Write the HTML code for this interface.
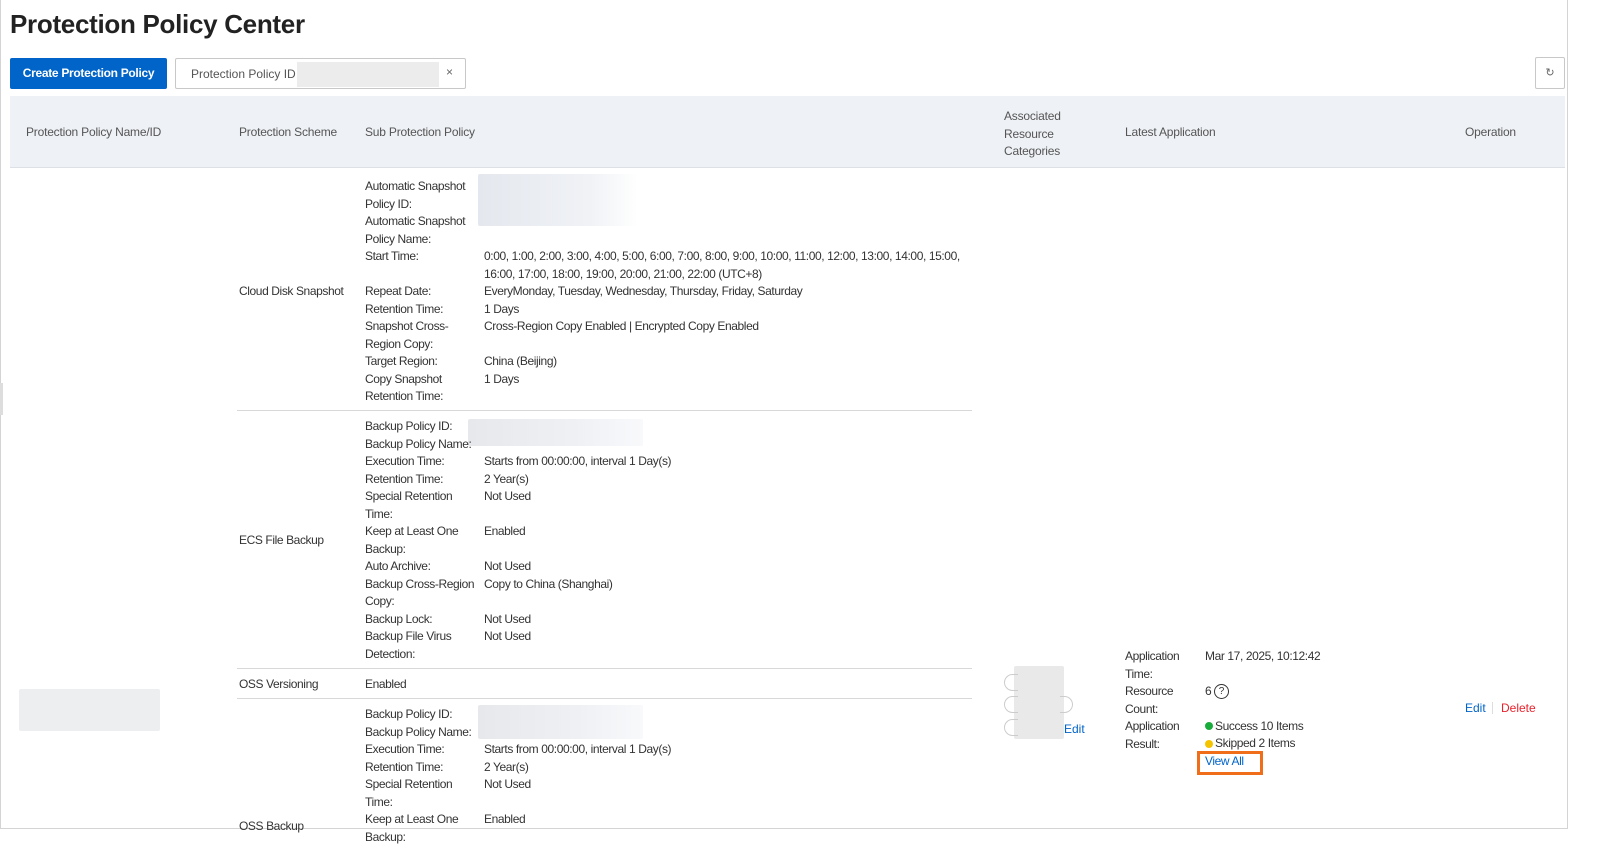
<!DOCTYPE html>
<html><head><meta charset="utf-8"><style>
*{margin:0;padding:0;box-sizing:border-box}
body{width:1614px;height:853px;background:#fff;font-family:"Liberation Sans",sans-serif;font-size:12px;color:#333;position:relative;overflow:hidden}
.a{position:absolute;white-space:nowrap;line-height:17px}
.h{position:absolute;white-space:nowrap;color:#555;font-size:12px;letter-spacing:-0.2px}
.t{letter-spacing:-0.4px}
.line{position:absolute;height:1px;background:#d8d8d8}
.blur{position:absolute;background:linear-gradient(90deg,#e6e8ec,#eef0f4 60%,#f8f9fb);border-radius:2px}
</style></head><body>
<div style="position:absolute;left:0;top:0;width:1568px;height:829px;border:1px solid #d4d4d4;border-top:none"></div>
<div style="position:absolute;left:0;top:383px;width:3px;height:32px;background:#ddd"></div>
<div class="a" style="left:10px;top:8px;font-size:26px;line-height:32px;font-weight:bold;color:#222;letter-spacing:-0.3px">Protection Policy Center</div>
<div style="position:absolute;left:10px;top:58px;width:157px;height:31px;background:#0064c8;border-radius:2px;color:#fff;font-weight:bold;font-size:12px;line-height:31px;text-align:center;letter-spacing:-0.3px">Create Protection Policy</div>
<div style="position:absolute;left:175px;top:58px;width:291px;height:31px;border:1px solid #c8c8c8;border-radius:2px"></div>
<div class="a" style="left:191px;top:66px;color:#555">Protection Policy ID</div>
<div style="position:absolute;left:297px;top:62px;width:142px;height:25px;background:#ececec"></div>
<div class="a" style="left:446px;top:64px;color:#666">×</div>
<div style="position:absolute;left:1535px;top:57px;width:30px;height:32px;border:1px solid #c8c8c8;border-radius:2px;text-align:center;line-height:30px;color:#666;font-size:11px">↻</div>
<div style="position:absolute;left:10px;top:96px;width:1555px;height:72px;background:#eef1f5;border-bottom:1px solid #dde1e6"></div>
<div class="h" style="left:26px;top:125px">Protection Policy Name/ID</div>
<div class="h" style="left:239px;top:125px">Protection Scheme</div>
<div class="h" style="left:365px;top:125px">Sub Protection Policy</div>
<div class="h" style="left:1004px;top:108px;line-height:17.5px">Associated<br>Resource<br>Categories</div>
<div class="h" style="left:1125px;top:125px">Latest Application</div>
<div class="h" style="left:1465px;top:125px">Operation</div>

<div class="blur" style="left:478px;top:174px;width:160px;height:52px;background:linear-gradient(90deg,#e4e8ee,#f0f2f6 70%,#fff)"></div>
<div class="blur" style="left:468px;top:419px;width:175px;height:27px"></div>
<div class="blur" style="left:478px;top:705px;width:165px;height:34px"></div>
<div class="blur" style="left:19px;top:689px;width:141px;height:42px;background:#eceeef"></div>
<div class="blur" style="left:1014px;top:666px;width:50px;height:73px;background:#e9e9e9"></div>

<div class="a t" style="left:239px;top:283px">Cloud Disk Snapshot</div>
<div class="a t" style="left:239px;top:532px">ECS File Backup</div>
<div class="a t" style="left:239px;top:676px">OSS Versioning</div>
<div class="a t" style="left:239px;top:818px">OSS Backup</div>

<div class="a t" style="left:365px;top:178px;line-height:17.5px">Automatic Snapshot<br>Policy ID:<br>Automatic Snapshot<br>Policy Name:<br>Start Time:<br><br>Repeat Date:<br>Retention Time:<br>Snapshot Cross-<br>Region Copy:<br>Target Region:<br>Copy Snapshot<br>Retention Time:</div>
<div class="a t" style="left:484px;top:248px;line-height:17.5px">0:00, 1:00, 2:00, 3:00, 4:00, 5:00, 6:00, 7:00, 8:00, 9:00, 10:00, 11:00, 12:00, 13:00, 14:00, 15:00,<br>16:00, 17:00, 18:00, 19:00, 20:00, 21:00, 22:00 (UTC+8)<br>EveryMonday, Tuesday, Wednesday, Thursday, Friday, Saturday<br>1 Days<br>Cross-Region Copy Enabled | Encrypted Copy Enabled<br><br>China (Beijing)<br>1 Days</div>
<div class="line" style="left:237px;top:410px;width:735px"></div>

<div class="a t" style="left:365px;top:418px;line-height:17.5px">Backup Policy ID:<br>Backup Policy Name:<br>Execution Time:<br>Retention Time:<br>Special Retention<br>Time:<br>Keep at Least One<br>Backup:<br>Auto Archive:<br>Backup Cross-Region<br>Copy:<br>Backup Lock:<br>Backup File Virus<br>Detection:</div>
<div class="a t" style="left:484px;top:453px;line-height:17.5px">Starts from 00:00:00, interval 1 Day(s)<br>2 Year(s)<br>Not Used<br><br>Enabled<br><br>Not Used<br>Copy to China (Shanghai)<br><br>Not Used<br>Not Used</div>
<div class="line" style="left:237px;top:668px;width:735px"></div>
<div class="a t" style="left:365px;top:676px">Enabled</div>
<div class="line" style="left:237px;top:698px;width:735px"></div>
<div class="a t" style="left:365px;top:706px;line-height:17.5px">Backup Policy ID:<br>Backup Policy Name:<br>Execution Time:<br>Retention Time:<br>Special Retention<br>Time:<br>Keep at Least One<br>Backup:</div>
<div class="a t" style="left:484px;top:741px;line-height:17.5px">Starts from 00:00:00, interval 1 Day(s)<br>2 Year(s)<br>Not Used<br><br>Enabled</div>

<div style="position:absolute;left:1004px;top:674px;width:14px;height:17px;border:1px solid #ccc;border-right:none;border-radius:9px 0 0 9px"></div>
<div style="position:absolute;left:1004px;top:696px;width:14px;height:17px;border:1px solid #ccc;border-right:none;border-radius:9px 0 0 9px"></div>
<div style="position:absolute;left:1060px;top:696px;width:13px;height:17px;border:1px solid #ccc;border-left:none;border-radius:0 9px 9px 0"></div>
<div style="position:absolute;left:1004px;top:719px;width:14px;height:17px;border:1px solid #ccc;border-right:none;border-radius:9px 0 0 9px"></div>
<div class="a" style="left:1064px;top:721px;color:#0064c8">Edit</div>

<div class="a t" style="left:1125px;top:648px;line-height:17.5px">Application<br>Time:<br>Resource<br>Count:<br>Application<br>Result:</div>
<div class="a t" style="left:1205px;top:648px">Mar 17, 2025, 10:12:42</div>
<div class="a t" style="left:1205px;top:683px">6</div>
<div style="position:absolute;left:1214px;top:684px;width:15px;height:15px;border:1px solid #333;border-radius:50%;font-size:10px;text-align:center;line-height:13px">?</div>
<div style="position:absolute;left:1205px;top:722px;width:8px;height:8px;border-radius:50%;background:#1aac3a"></div>
<div class="a t" style="left:1215px;top:718px">Success 10 Items</div>
<div style="position:absolute;left:1205px;top:740px;width:8px;height:8px;border-radius:50%;background:#f5c400"></div>
<div class="a t" style="left:1215px;top:735px">Skipped 2 Items</div>
<div class="a t" style="left:1205px;top:753px;color:#0064c8">View All</div>
<div style="position:absolute;left:1197px;top:751px;width:66px;height:24px;border:3px solid #f06d1a"></div>

<div class="a" style="left:1465px;top:700px;color:#0064c8">Edit</div>
<div style="position:absolute;left:1492px;top:702px;width:1px;height:12px;background:#ddd"></div>
<div class="a" style="left:1501px;top:700px;color:#e8232d">Delete</div>
</body></html>
